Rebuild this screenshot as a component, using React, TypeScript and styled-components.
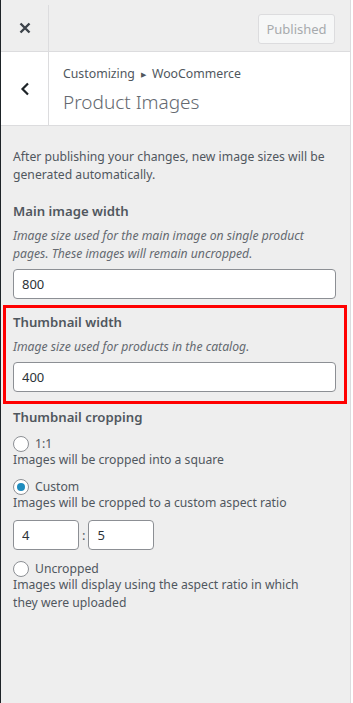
import React from "react";
import styled, { createGlobalStyle } from "styled-components";

const GlobalStyle = createGlobalStyle`
    html, body {
        margin: 0;
        padding: 0;
        background: #ffffff;
    }
    body {
        font-family: "Noto Sans", "Open Sans", sans-serif;
        -webkit-font-smoothing: antialiased;
    }
`

const Panel = styled.div`
    display: flex;
    flex-direction: column;
    width: 351px;
    height: 703px;
    background-color: #eeeeee;
    border-left: 1px solid #1d2327;
    border-right: 1px solid #dcdcde;
    box-sizing: border-box;
    overflow: hidden;
`

const Header = styled.div`
    display: flex;
    align-items: center;
    height: 52px;
    padding-top: 5px;
    border-bottom: 1px solid #dcdcde;
    box-sizing: border-box;
    background-color: #eeeeee;
`

const SquareButton = styled.div<{ $height: number }>`
    display: flex;
    align-items: center;
    justify-content: center;
    width: 48px;
    height: ${(p) => p.$height}px;
    border-right: 1px solid #dcdcde;
    box-sizing: border-box;
    color: #3c434a;
    flex-shrink: 0;
`

const PublishedButton = styled.div`
    margin-left: auto;
    margin-right: 15px;
    margin-top: 1px;
    height: 30px;
    width: 77px;
    display: flex;
    align-items: center;
    justify-content: center;
    border: 1px solid #dcdcde;
    border-radius: 3px;
    background-color: #f6f7f7;
    color: #a7aaad;
    font-size: 13px;
    box-sizing: border-box;
`

const SectionTitle = styled.div`
    display: flex;
    align-items: center;
    height: 74px;
    background-color: #ffffff;
    border-bottom: 1px solid #dcdcde;
    box-sizing: border-box;
`

const TitleBlock = styled.div`
    display: flex;
    flex-direction: column;
    padding-left: 14px;
    padding-top: 2px;
`

const Breadcrumb = styled.div`
    font-size: 12.3px;
    color: #50575e;
    line-height: 18px;

    span {
        font-size: 7px;
        margin: 0 6px;
        position: relative;
        top: -1px;
    }
`

const PageTitle = styled.div`
    font-size: 19px;
    color: #646970;
    line-height: 26px;
    margin-top: 4px;
    font-weight: 300;
`

const Content = styled.div`
    padding: 22px 14px 0 12px;
    color: #50575e;
`

const Intro = styled.p`
    margin: 0 0 17px 0;
    font-size: 12.2px;
    line-height: 18px;
`

const Field = styled.div<{ $highlight?: boolean }>`
    display: flex;
    flex-direction: column;
    margin-bottom: ${(p) => (p.$highlight ? "3px" : "6px")};
    ${(p) =>
        p.$highlight &&
        `
        border: 3px solid #ff0000;
        margin-left: -10px;
        margin-right: -11px;
        padding: 4px 8px 9px 7px;
    `}
`

const FieldLabel = styled.div<{ $gap?: number }>`
    font-size: 13.2px;
    font-weight: 600;
    color: #50575e;
    line-height: 20px;
    margin-bottom: ${(p) => p.$gap ?? 6}px;
`

const FieldDescription = styled.div`
    font-size: 12.2px;
    font-style: italic;
    line-height: 18px;
    color: #646970;
    margin-bottom: 6px;
`

const TextInput = styled.input<{ $width?: number }>`
    box-sizing: border-box;
    width: ${(p) => (p.$width ? `${p.$width}px` : "100%")};
    height: 30px;
    border: 1px solid #8c8f94;
    border-radius: 4px;
    background: #ffffff;
    padding: 0 8px;
    font-family: inherit;
    font-size: 13px;
    color: #2c3338;
    outline: none;
`

const RadioRow = styled.label`
    display: flex;
    align-items: center;
    gap: 6px;
    font-size: 12.2px;
    line-height: 18px;
`

const RadioCircle = styled.span<{ $checked?: boolean }>`
    display: inline-flex;
    align-items: center;
    justify-content: center;
    width: 16px;
    height: 16px;
    border: 1px solid #8c8f94;
    border-radius: 50%;
    background: #ffffff;
    box-sizing: border-box;

    &::after {
        content: "";
        display: ${(p) => (p.$checked ? "block" : "none")};
        width: 8px;
        height: 8px;
        border-radius: 50%;
        background: #1e8cbe;
    }
`

const OptionDescription = styled.div`
    font-size: 12.2px;
    line-height: 18px;
    max-width: 300px;
    margin-top: -2px;
    margin-bottom: 9px;
`

const RatioRow = styled.div`
    display: flex;
    align-items: center;
    gap: 3px;
    margin-top: -1px;
    margin-bottom: 10px;
    font-size: 13px;
`

function CloseIcon() {
    return (
        <svg width="12" height="12" viewBox="0 0 12 12">
            <path d="M1.5 1.5 L10.5 10.5 M10.5 1.5 L1.5 10.5" stroke="#3c434a" strokeWidth="2.4" strokeLinecap="butt" />
        </svg>
    )
}

function BackIcon() {
    return (
        <svg width="10" height="14" viewBox="0 0 10 14">
            <path d="M8 1.5 L2.5 7 L8 12.5" stroke="#1d2327" strokeWidth="2.2" fill="none" />
        </svg>
    )
}

export default function App() {
    return (
        <Panel>
            <GlobalStyle />
            <Header>
                <SquareButton $height={46}>
                    <CloseIcon />
                </SquareButton>
                <PublishedButton>Published</PublishedButton>
            </Header>

            <SectionTitle>
                <SquareButton $height={73}>
                    <BackIcon />
                </SquareButton>
                <TitleBlock>
                    <Breadcrumb>
                        Customizing<span>▶</span>WooCommerce
                    </Breadcrumb>
                    <PageTitle>Product Images</PageTitle>
                </TitleBlock>
            </SectionTitle>

            <Content>
                <Intro>After publishing your changes, new image sizes will be generated automatically.</Intro>

                <Field>
                    <FieldLabel>Main image width</FieldLabel>
                    <FieldDescription>
                        Image size used for the main image on single product pages. These images will remain uncropped.
                    </FieldDescription>
                    <TextInput type="text" value="800" readOnly />
                </Field>

                <Field $highlight>
                    <FieldLabel>Thumbnail width</FieldLabel>
                    <FieldDescription>Image size used for products in the catalog.</FieldDescription>
                    <TextInput type="text" value="400" readOnly />
                </Field>

                <FieldLabel $gap={8}>Thumbnail cropping</FieldLabel>

                <RadioRow>
                    <RadioCircle />
                    1:1
                </RadioRow>
                <OptionDescription>Images will be cropped into a square</OptionDescription>

                <RadioRow>
                    <RadioCircle $checked />
                    Custom
                </RadioRow>
                <OptionDescription>Images will be cropped to a custom aspect ratio</OptionDescription>

                <RatioRow>
                    <TextInput type="text" value="4" readOnly $width={66} />
                    :
                    <TextInput type="text" value="5" readOnly $width={66} />
                </RatioRow>

                <RadioRow>
                    <RadioCircle />
                    Uncropped
                </RadioRow>
                <OptionDescription>
                    Images will display using the aspect ratio in which they were uploaded
                </OptionDescription>
            </Content>
        </Panel>
    )
}
